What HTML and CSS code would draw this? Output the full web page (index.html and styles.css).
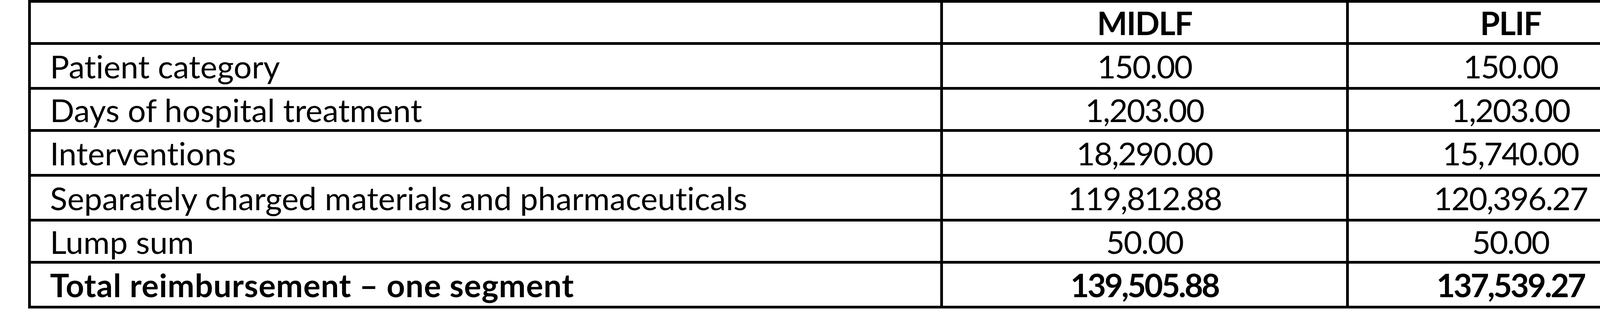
FILE: index.html
```html
<!DOCTYPE html>
<html lang="en">
<head>
<meta charset="utf-8">
<title>Reimbursement comparison</title>
<link rel="stylesheet" href="styles.css">
</head>
<body>
<table class="costs">
  <colgroup>
    <col class="c-label">
    <col class="c-val">
    <col class="c-val2">
  </colgroup>
  <thead>
    <tr class="r-short head">
      <th class="label"></th>
      <th class="num">MIDLF</th>
      <th class="num">PLIF</th>
    </tr>
  </thead>
  <tbody>
    <tr class="r-tall">
      <td class="label">Patient category</td>
      <td class="num">150.00</td>
      <td class="num">150.00</td>
    </tr>
    <tr class="r-short">
      <td class="label">Days of hospital treatment</td>
      <td class="num">1,203.00</td>
      <td class="num">1,203.00</td>
    </tr>
    <tr class="r-tall">
      <td class="label">Interventions</td>
      <td class="num">18,290.00</td>
      <td class="num">15,740.00</td>
    </tr>
    <tr class="r-tall">
      <td class="label">Separately charged materials and pharmaceuticals</td>
      <td class="num">119,812.88</td>
      <td class="num">120,396.27</td>
    </tr>
    <tr class="r-short">
      <td class="label">Lump sum</td>
      <td class="num">50.00</td>
      <td class="num">50.00</td>
    </tr>
    <tr class="r-tall total">
      <td class="label">Total reimbursement – one segment</td>
      <td class="num">139,505.88</td>
      <td class="num">137,539.27</td>
    </tr>
  </tbody>
</table>
</body>
</html>
```
FILE: styles.css
```css
html, body {
  margin: 0;
  padding: 0;
  background: #ffffff;
}

body {
  font-family: Lato, "Open Sans", sans-serif;
  color: #000000;
  font-variant-ligatures: none;
}

.costs {
  margin-left: 72px;
  width: 4216px;
  table-layout: fixed;
  border-collapse: separate;
  border-spacing: 0;
  border-top: 7px solid #000;
  border-left: 7px solid #000;
}

.c-label { width: 2335px; }
.c-val { width: 1039px; }
.c-val2 { width: 835px; }

.costs th,
.costs td {
  box-sizing: border-box;
  border-right: 7px solid #000;
  border-bottom: 7px solid #000;
  padding: 0;
  font-size: 82px;
  font-weight: 400;
  line-height: 1;
  vertical-align: middle;
  white-space: nowrap;
}

.costs .label {
  text-align: left;
  padding-left: 49px;
}

.costs .num {
  text-align: center;
  letter-spacing: -2.5px;
}

.r-short { height: 108px; }
.r-tall { height: 115px; }

.head th,
.total td {
  font-weight: 700;
}

.head .num {
  letter-spacing: -2px;
}

.total .num {
  letter-spacing: -4px;
}

.total .label {
  letter-spacing: 1px;
}
```
